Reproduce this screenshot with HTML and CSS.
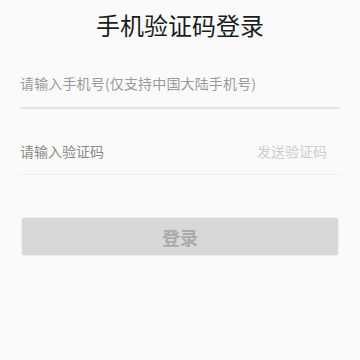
FILE: index.html
```html
<!DOCTYPE html>
<html lang="zh-CN">
<head>
    <meta charset="UTF-8">
    <meta name="viewport" content="width=device-width, initial-scale=1.0">
    <title>手机验证码登录</title>
    <link rel="stylesheet" href="styles.css">
</head>
<body>
    <div class="login-page">
        <div class="title">手机验证码登录</div>

        <div class="field field-phone">
            <span class="placeholder phone-placeholder">请输入手机号(仅支持中国大陆手机号)</span>
        </div>

        <div class="field field-code">
            <span class="placeholder code-placeholder">请输入验证码</span>
            <span class="send-code">发送验证码</span>
        </div>

        <button class="login-btn" disabled>登录</button>
    </div>
</body>
</html>
```

FILE: styles.css
```css
* {
    box-sizing: border-box;
}

body {
    margin: 0;
    padding: 0;
    height: 100vh;
    background-color: #fafafa;
    font-family: 'Noto Sans CJK SC', 'Noto Sans', sans-serif;
    overflow: hidden;
}

.login-page {
    display: flex;
    flex-direction: column;
    padding: 0 20px;
}

.title {
    height: 50px;
    line-height: 50px;
    font-size: 24px;
    color: #1c1c1c;
    text-align: center;
}

.field {
    display: flex;
    justify-content: space-between;
    align-items: center;
    font-size: 14px;
    line-height: 20px;
}

.field-phone {
    padding: 23px 0 14px;
    border-bottom: 2px solid #e4e4e4;
}

.field-code {
    padding: 32px 0 13px;
    border-bottom: 1px solid #efefef;
}

.placeholder {
    color: #9a9a9a;
}

.phone-placeholder {
    letter-spacing: 0.15px;
}

.code-placeholder {
    color: #8a8a8a;
}

.send-code {
    color: #cdcdcd;
    margin-right: 13px;
}

.login-btn {
    margin: 43px 2px 0;
    height: 37px;
    border: none;
    border-radius: 2px;
    background-color: #d8d8d8;
    box-shadow: 0 0 0 1px #f0f0f0;
    color: #aaaaaa;
    font-family: inherit;
    font-size: 18px;
    font-weight: bold;
}
```
